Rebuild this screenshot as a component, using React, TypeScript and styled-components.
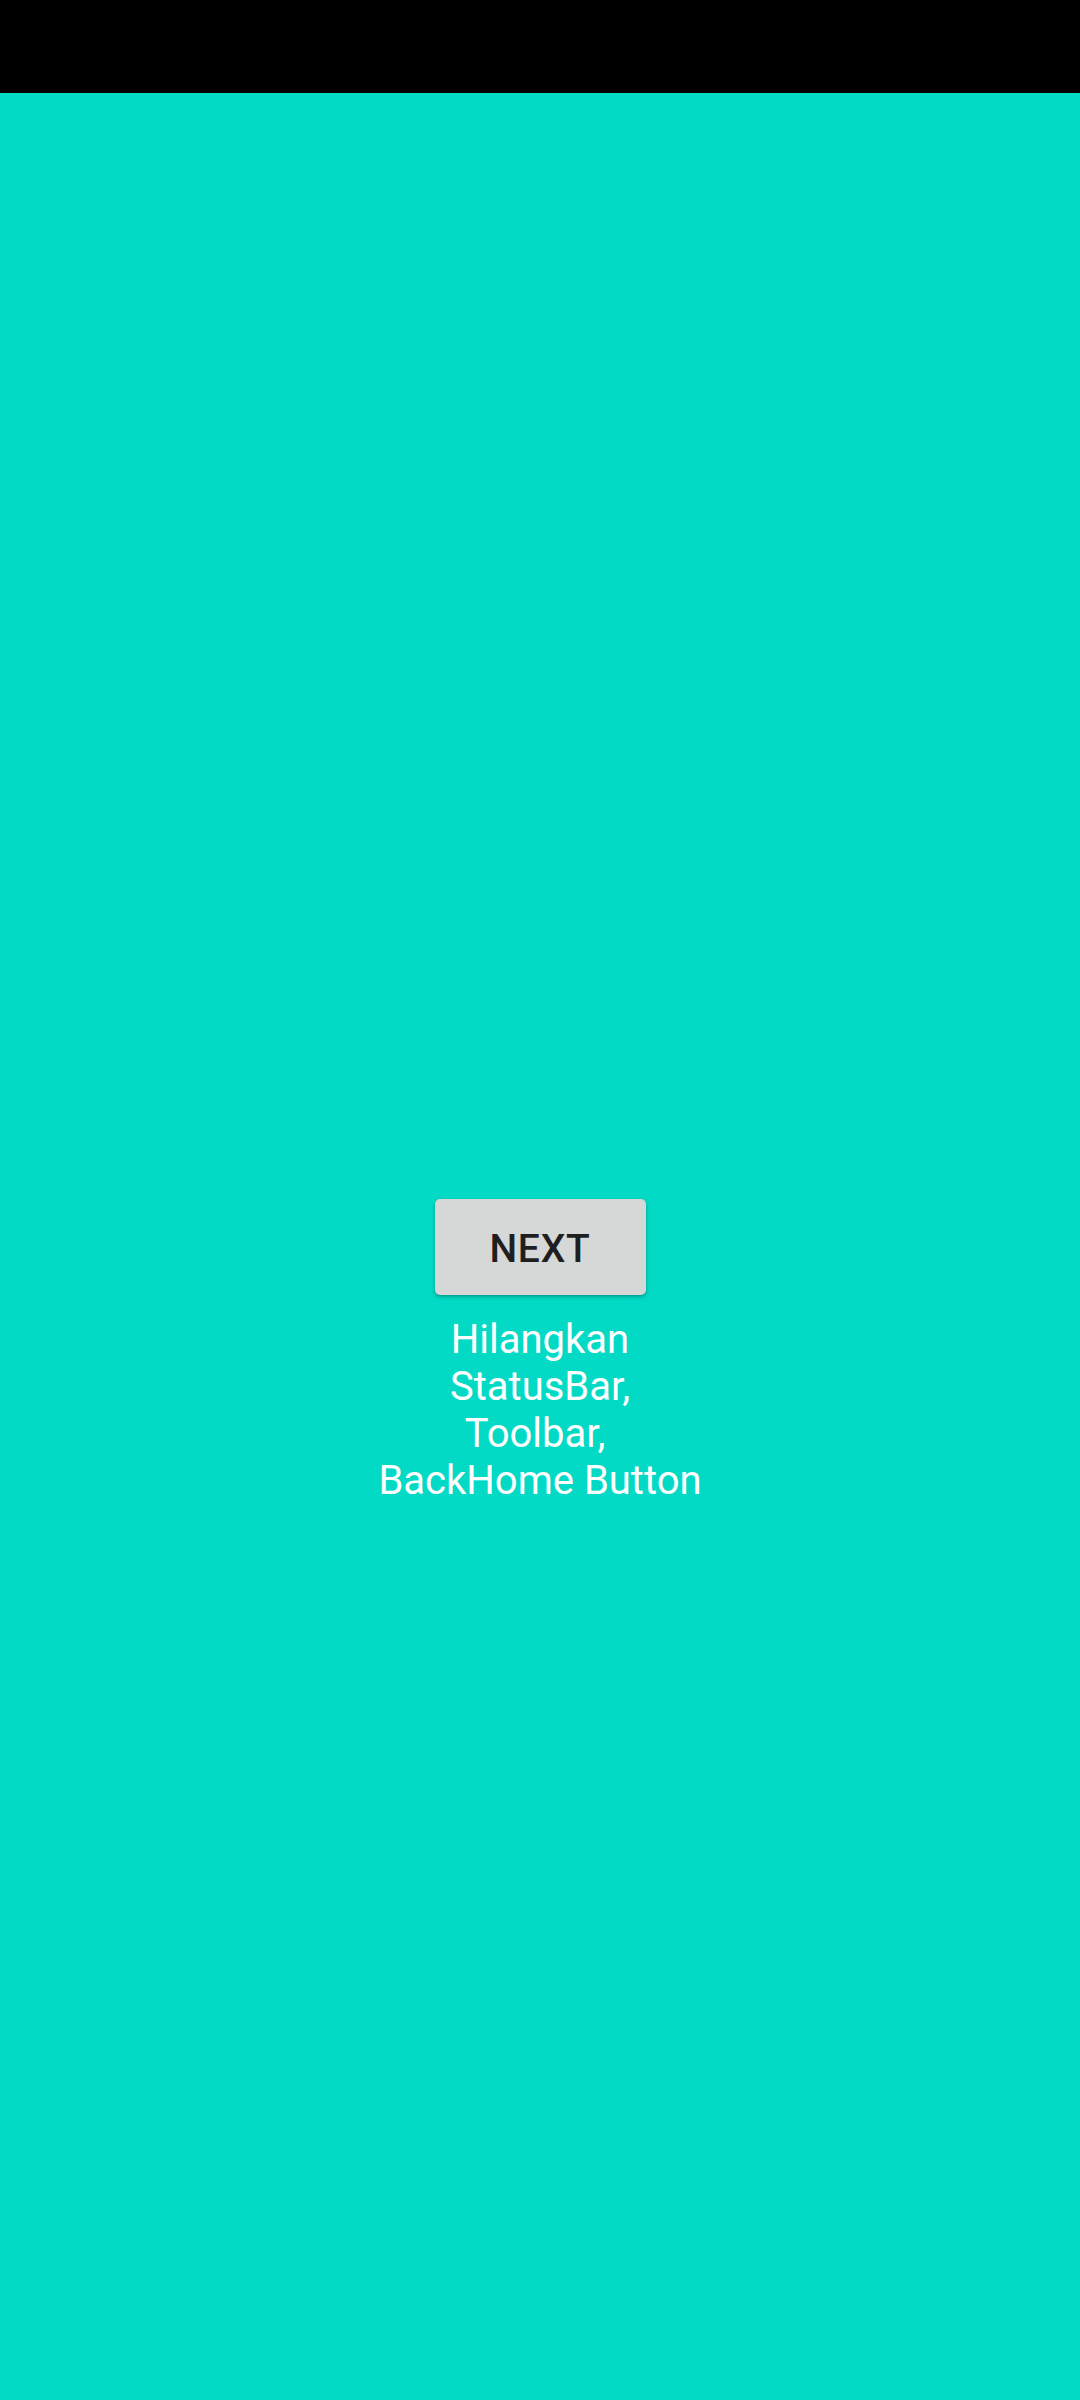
import React from "react";
import styled, { createGlobalStyle } from "styled-components";

const GlobalStyle = createGlobalStyle`
  html, body {
    margin: 0;
    padding: 0;
  }
  body {
    font-family: Roboto, "Noto Sans", sans-serif;
    background: #03dac5;
  }
`;

export default function App() {
  return (
    <>
      <GlobalStyle />
      <Screen>
        <StatusBar />
        <Content>
          <Spacer />
          <NextButton type="button">NEXT</NextButton>
          <Caption>
            Hilangkan
            <br />
            StatusBar,
            <br />
            Toolbar,&nbsp;
            <br />
            BackHome Button
          </Caption>
        </Content>
      </Screen>
    </>
  );
}

const Screen = styled.div`
  width: 1080px;
  height: 2400px;
  display: flex;
  flex-direction: column;
  background: #03dac5;
  overflow: hidden;
`;

const StatusBar = styled.div`
  height: 93px;
  flex-shrink: 0;
  background: #000000;
`;

const Content = styled.main`
  flex: 1;
  display: grid;
  grid-template-rows: 1fr auto 1fr;
  justify-items: center;
`;

const Spacer = styled.div``;

const NextButton = styled.button`
  width: 211px;
  height: 96px;
  border: none;
  border-radius: 5px;
  background: #d6d7d7;
  color: #1f1f1f;
  font-family: Roboto, "Noto Sans", sans-serif;
  font-size: 39px;
  font-weight: 500;
  letter-spacing: 0.02em;
  box-shadow: 0 2px 4px rgba(0, 0, 0, 0.22), 0 1px 2px rgba(0, 0, 0, 0.12);
  padding: 5px 0 0;
`;

const Caption = styled.p`
  align-self: start;
  margin: 21px 0 0;
  color: #ffffff;
  font-family: Roboto, "Noto Sans", sans-serif;
  font-size: 40px;
  line-height: normal;
  text-align: center;
`;
